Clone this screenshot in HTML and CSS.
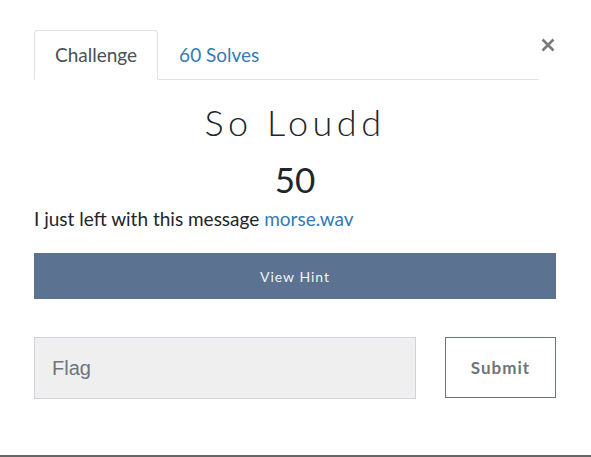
FILE: index.html
```html
<!DOCTYPE html>
<html>
<head>
<meta charset="utf-8">
<link rel="stylesheet" href="styles.css">
</head>
<body>
<div class="modal">
  <div class="header">
    <ul class="tabs">
      <li class="tab active">Challenge</li>
      <li class="tab"><a href="#">60 Solves</a></li>
    </ul>
    <button class="close" aria-label="Close">
      <svg width="14" height="14" viewBox="0 0 14 14"><path d="M1.5 1.5 L12.5 12.5 M12.5 1.5 L1.5 12.5" stroke="#7a7a7a" stroke-width="2.6" fill="none"/></svg>
    </button>
  </div>
  <h3 class="title">So Loudd</h3>
  <h4 class="value">50</h4>
  <p class="desc">I just left with this message <a href="#">morse.wav</a></p>
  <button class="hint">View Hint</button>
  <div class="submit-row">
    <input class="flag" type="text" placeholder="Flag">
    <button class="submit">Submit</button>
  </div>
</div>
</body>
</html>
```

FILE: styles.css
```css
html, body {
  margin: 0;
  padding: 0;
  background: #fff;
}
body {
  font-family: Lato, "Noto Sans", sans-serif;
  color: #212529;
}
.modal {
  box-sizing: border-box;
  height: 457px;
  padding: 30px 35px 0 34px;
  border-bottom: 2px solid #666;
}
.header {
  display: flex;
  align-items: flex-start;
}
.tabs {
  list-style: none;
  margin: 0;
  padding: 0;
  display: flex;
  width: 505px;
  border-bottom: 1px solid #dee2e6;
}
.tab {
  font-size: 19px;
  line-height: 28px;
  padding: 10px 20px;
  border: 1px solid transparent;
  border-top-left-radius: 4px;
  border-top-right-radius: 4px;
  margin-bottom: -1px;
  color: #495057;
}
.tab.active {
  border-color: #dee2e6 #dee2e6 #fff;
  background: #fff;
}
.tab a {
  color: #337ab7;
  text-decoration: none;
}
.close {
  margin: 8px 0 0 2px;
  padding: 0;
  border: 0;
  background: none;
  width: 14px;
  height: 14px;
  display: block;
}
.close svg { display: block; }
.title {
  margin: 20px 0 0;
  text-align: center;
  font-weight: 300;
  font-size: 36px;
  line-height: 44px;
  letter-spacing: 4.5px;
  color: #212529;
}
.value {
  margin: 14px 0 0;
  text-align: center;
  font-weight: 400;
  font-size: 35px;
  line-height: 42px;
  color: #212529;
}
.desc {
  margin: 5px 0 0;
  font-size: 19px;
  line-height: 28px;
}
.desc a {
  color: #337ab7;
  text-decoration: none;
}
.hint {
  display: block;
  width: 100%;
  height: 46px;
  margin-top: 20px;
  border: 0;
  background: #5b7290;
  color: #f2f4f7;
  font-family: Lato, sans-serif;
  font-size: 14px;
  letter-spacing: 1px;
}
.submit-row {
  display: flex;
  align-items: flex-start;
  justify-content: space-between;
  margin-top: 38px;
}
.flag {
  box-sizing: border-box;
  width: 382px;
  height: 62px;
  border: 1px solid #ced4da;
  background: #efefef;
  padding: 0 17px;
  font-family: "Liberation Sans", Arial, sans-serif;
  font-size: 20px;
  color: #495057;
}
.flag::placeholder {
  color: #6c757d;
}
.submit {
  box-sizing: border-box;
  width: 111px;
  height: 61px;
  border: 1px solid #6c757d;
  background: #fff;
  color: #6c757d;
  font-family: Lato, sans-serif;
  font-weight: 700;
  font-size: 17px;
  letter-spacing: 1px;
}
```
